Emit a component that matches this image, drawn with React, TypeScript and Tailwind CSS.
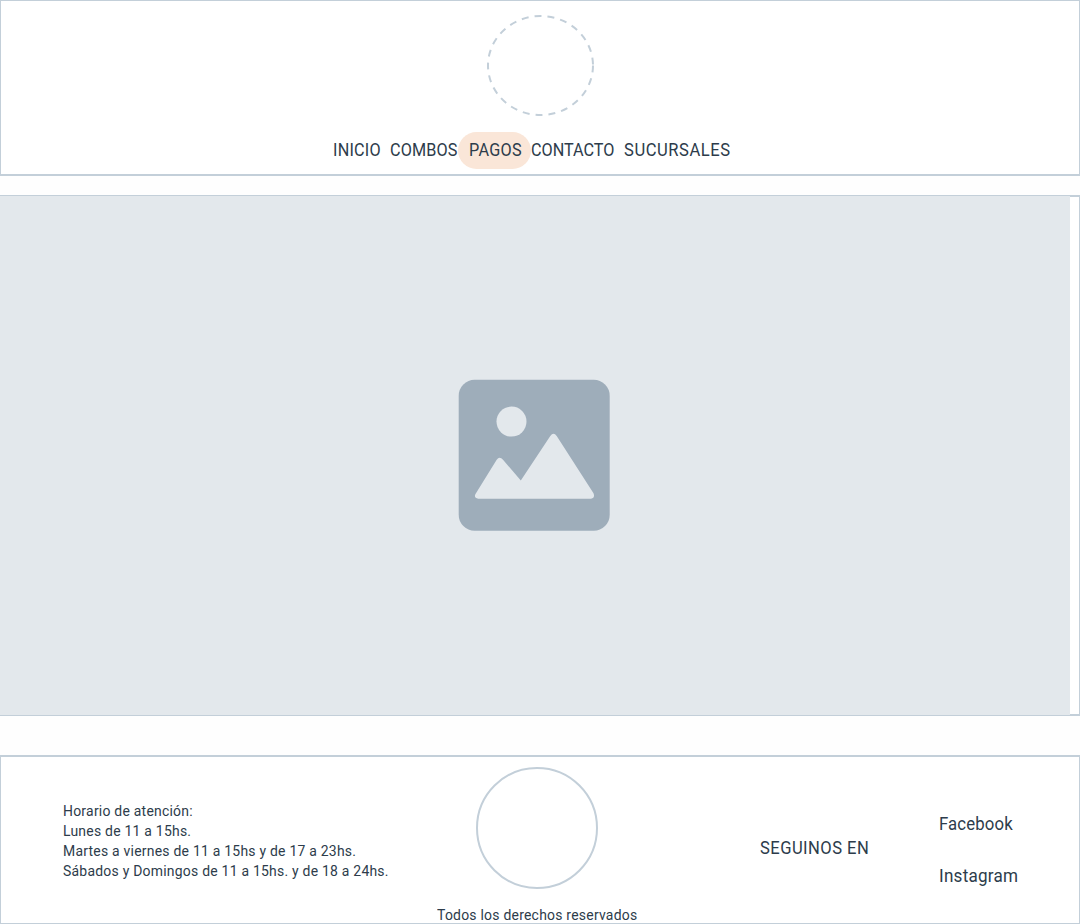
const navItems = [
  { label: "INICIO", box: "w-[57px]", fit: "scale-x-[0.9] tracking-[0.25px]" },
  { label: "COMBOS", box: "w-[68px]", fit: "scale-x-[0.9] tracking-[0.15px]" },
  { label: "PAGOS", box: "w-[73px] rounded-full bg-[#fae6d8] pl-[11px]", fit: "scale-x-[0.9] tracking-[0.35px]" },
  { label: "CONTACTO", box: "w-[93px]", fit: "scale-x-[0.9] tracking-[0px]" },
  { label: "SUCURSALES", box: "w-[110px]", fit: "scale-x-[0.92] tracking-[0.6px]" },
];

const hours = [
  "Horario de atención:",
  "Lunes de 11 a 15hs.",
  "Martes a viernes de 11 a 15hs y de 17 a 23hs.",
  "Sábados y Domingos de 11 a 15hs. y de 18 a 24hs.",
];

function Header() {
  return (
    <header className="flex h-[176px] flex-col border border-b-2 border-[#c3cfd9] bg-white">
      <svg className="mt-[13px] ml-[485px] h-[103px] w-[109px] shrink-0" viewBox="0 0 109 103" fill="none">
        <ellipse cx="54.5" cy="51.5" rx="52.5" ry="49.5" stroke="#c3cfd9" strokeWidth="2" strokeDasharray="7 6" />
      </svg>
      <nav className="mt-[15px] ml-[332px] flex h-[37px] text-[18px] leading-[36px]">
        {navItems.map((item) => (
          <a key={item.label} className={`shrink-0 whitespace-nowrap ${item.box}`}>
            <span className={`inline-block origin-left ${item.fit}`}>{item.label}</span>
          </a>
        ))}
      </nav>
    </header>
  );
}

function Hero() {
  return (
    <section className="mt-[19px] flex h-[521px]">
      <div className="flex w-[1070px] items-center justify-center border-y border-[#c3cfd9] bg-[#e3e8ec] pr-[2px] pb-px">
        <svg className="h-[152px] w-[152px]" viewBox="0 0 152 152">
          <rect x="0.7" y="0.7" width="151" height="151" rx="16" fill="#9eadba" />
          <circle cx="53.5" cy="42.6" r="15" fill="#e3e8ec" />
          <path
            d="M17.5 115 L38.7 80.8 Q41.5 76.7 45 80.8 L62.8 101.5 L92.3 57 Q95.5 52.5 98.7 57 L135.5 114.3 Q137.3 119 133 119.7 H20.3 Q15.5 119 17.5 115 Z"
            fill="#e3e8ec"
          />
        </svg>
      </div>
      <div className="w-[10px] border-y-2 border-r border-[#c3cfd9] bg-white" />
    </section>
  );
}

function Footer() {
  return (
    <footer className="mt-[39px] flex h-[169px] border border-t-2 border-[#c3cfd9] bg-white">
      <div className="w-[375px] shrink-0 pt-[44px] pl-[62px] text-[15px] leading-[20px]">
        {hours.map((line) => (
          <p key={line} className="origin-left scale-x-[0.93] tracking-[0.25px] whitespace-nowrap">
            {line}
          </p>
        ))}
      </div>
      <div className="ml-[60px] flex w-[202px] shrink-0 flex-col">
        <div className="mt-[10px] ml-[40px] h-[122px] w-[122px] shrink-0 rounded-full border-2 border-[#c3cfd9]" />
        <p className="mt-[16px] ml-px origin-left scale-x-[0.93] text-[15px] leading-[20px] tracking-[0.25px] whitespace-nowrap">
          Todos los derechos reservados
        </p>
      </div>
      <p className="ml-[122px] w-[179px] shrink-0 origin-left scale-x-[0.92] pt-[78px] text-[18px] leading-[26px] tracking-[0.5px] whitespace-nowrap">
        SEGUINOS EN
      </p>
      <div className="flex flex-col gap-[26px] pt-[54px] text-[18px] leading-[26px]">
        <a className="origin-left scale-x-[0.93] tracking-[0.15px]">Facebook</a>
        <a className="origin-left scale-x-[0.95] tracking-[0.25px]">Instagram</a>
      </div>
    </footer>
  );
}

export default function App() {
  return (
    <div className="h-[924px] w-[1080px] overflow-hidden bg-[#fefefe] font-['Roboto',sans-serif] text-[#2d3c4b]">
      <Header />
      <Hero />
      <Footer />
    </div>
  );
}
